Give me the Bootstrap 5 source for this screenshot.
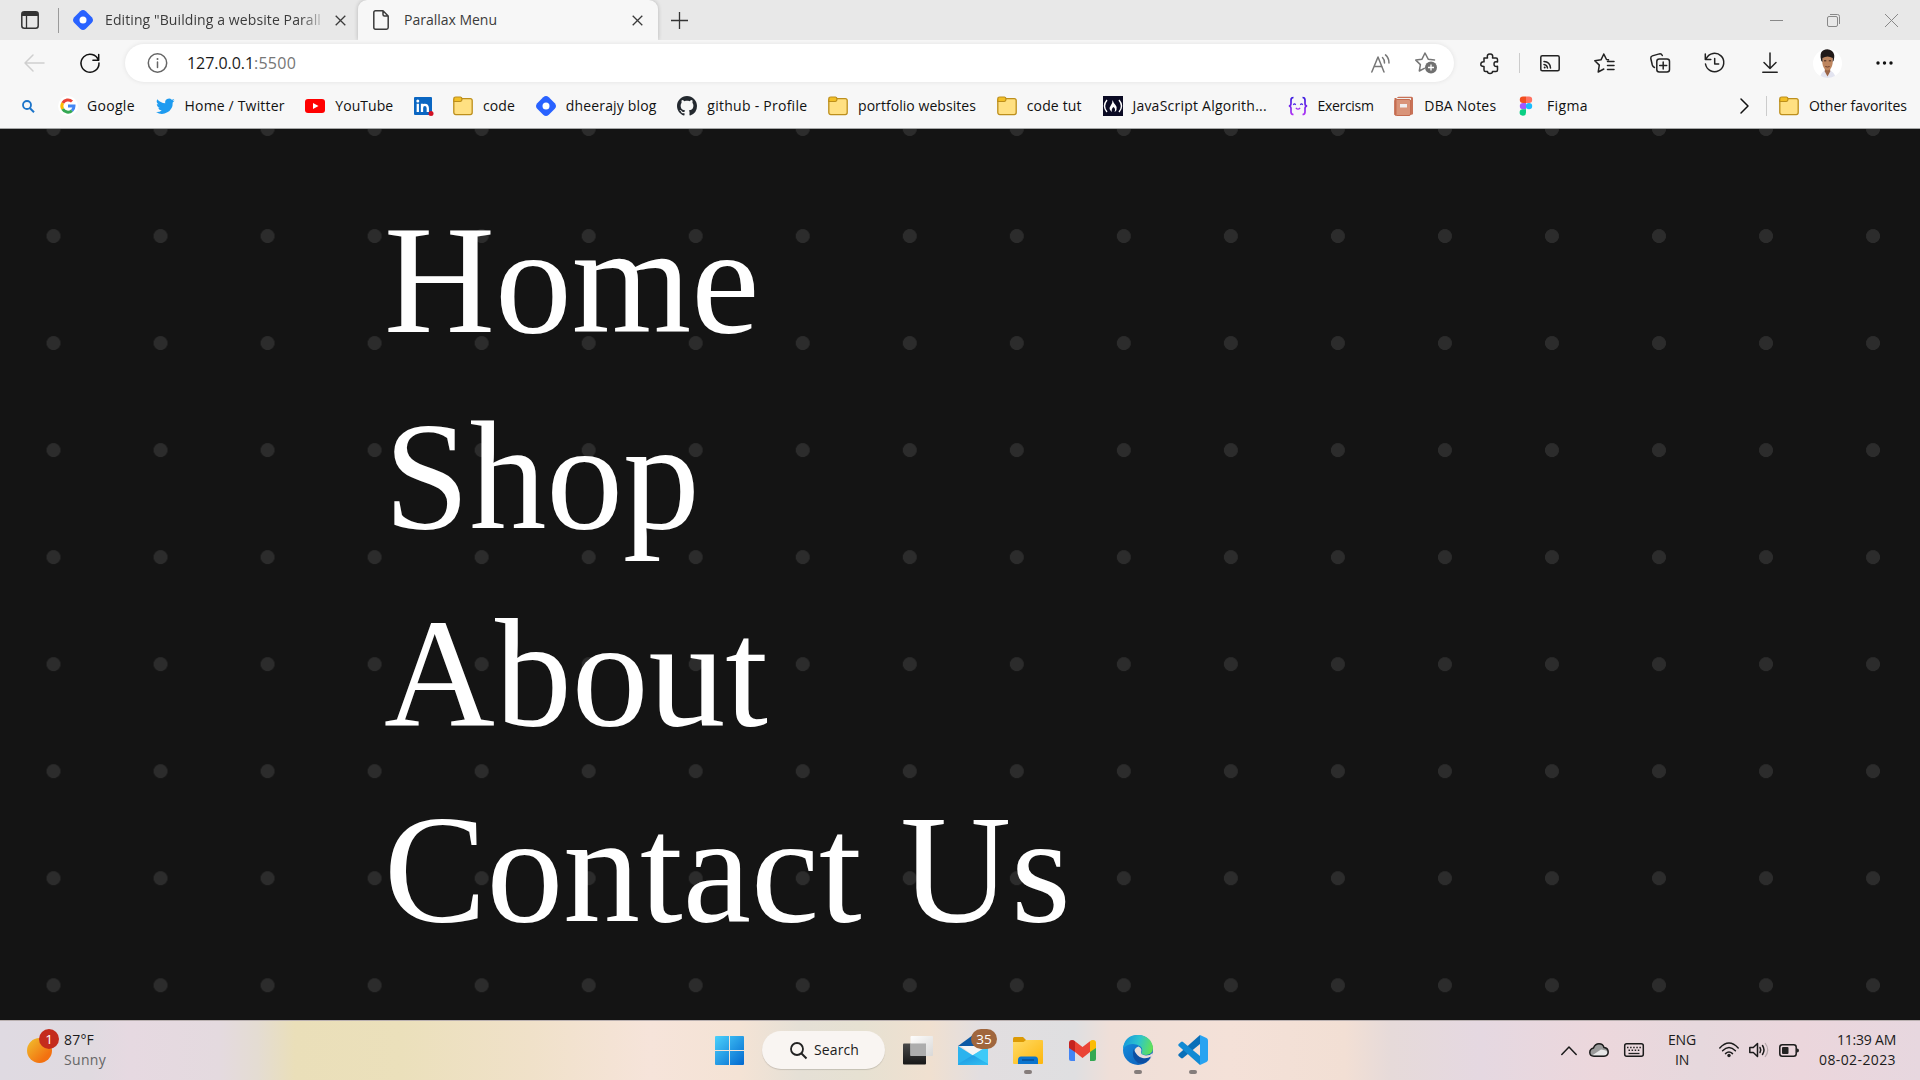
<!DOCTYPE html>
<html lang="en">
<head>
<meta charset="utf-8">
<meta name="viewport" content="width=device-width, initial-scale=1">
<title>Parallax Menu</title>
<link href="https://cdn.jsdelivr.net/npm/bootstrap@5.3.0/dist/css/bootstrap.min.css" rel="stylesheet">
<style>
body{font-family:"Open Sans","Noto Sans",sans-serif;font-size:14px;line-height:20px;color:#1b1b1b;background:#141414}
svg{display:block;flex:none;overflow:visible}
.screen{width:1920px;height:1080px}
.ln{fill:none;stroke:currentColor;stroke-width:1.5;stroke-linecap:round;stroke-linejoin:round}
[data-w]{display:inline-block;white-space:nowrap}
/* tab strip */
.tabstrip{height:40px;background:#e8e8e8;color:#3b3b3b}
.tab-idle{width:299px;height:40px;padding-left:14px;position:relative}
.tab-live{width:300px;height:40px;background:#f7f7f7;border-radius:9px 9px 0 0;padding:0 15px 0 15px;box-shadow:0 0 4px rgba(0,0,0,.22);clip-path:inset(-4px -4px 0 -4px)}
.fade-label{width:219px;-webkit-mask-image:linear-gradient(90deg,#000 195px,rgba(0,0,0,.2) 217px);mask-image:linear-gradient(90deg,#000 195px,rgba(0,0,0,.2) 217px)}
.vline{width:1px;background:#9a9a9a}
.win-ctl{gap:44px;padding-right:22px;color:#999}
/* address row */
.tools{height:45px;background:#f7f7f7;padding-left:24px;padding-right:26px;padding-top:1px}
.omnibox{width:1329px;height:38px;border-radius:19px;background:#fff;box-shadow:0 0 5px rgba(0,0,0,.09);padding:0 16px 0 23px;font-size:16px}
.tool-set{gap:0;color:#222}
.avatar-pic{width:29px;height:29px}
/* favourites */
.favs{height:44px;background:#f7f7f7;border-bottom:1px solid #a5a7a7;padding:0 13px 1px 22px;color:#111}
.fav{display:flex;align-items:center;gap:9.9px;margin-right:20.8px;flex:none}
/* page */
.stage{height:891px;background-color:#141414;background-image:radial-gradient(circle at center,#2c2c2c 6.6px,transparent 7.3px);background-size:107.04px 107.04px;background-position:0 -53.5px;padding:53px 0 0 384px}
.menu-link{display:block;font-family:"Liberation Serif","Times New Roman",serif;font-size:153.6px;line-height:196.3px;color:#fff;text-decoration:none;width:max-content}
/* taskbar */
.taskbar{height:60px;border-top:1px solid #b9b0b0;background:linear-gradient(90deg,#dfdae2 0,#e0dae0 90px,#e6d9e1 130px,#e4dadf 220px,#e4dcd2 258px,#eadfb9 295px,#ebe0bb 400px,#f0e1c9 530px,#f6e4da 650px,#f4e3d5 740px,#e5e0d6 800px,#e6e1d2 860px,#f0e0d0 930px,#e2dee0 980px,#dfdfe1 1075px,#efdfd8 1110px,#f4e1d8 1230px,#f2dfd4 1345px,#e6dad9 1390px,#e5d8e1 1480px,#ecd7dc 1600px,#e6d8dd 1700px,#ebd6dc 1800px,#e7d7df 1920px);padding-bottom:1px}
.weather{width:715px;padding-left:27px}
.search-pill{width:123px;height:38px;border-radius:19px;background:#f9f5f2;box-shadow:0 1px 1px rgba(0,0,0,.15);padding-left:28px;gap:7px;margin:0 18px}
.app{width:30px;height:58px;display:flex;align-items:center;position:relative;margin-right:25px}
.app.running::after{content:"";position:absolute;left:11px;bottom:5px;width:8px;height:4px;border-radius:2px;background:#857d7b}
.count{position:absolute;left:13px;top:8px;width:26px;height:20px;border-radius:10px;background:#a0663d;color:#fff;text-align:center;font-size:13.500px}
.alert-dot{position:absolute;left:12px;top:-9px;width:20px;height:20px;border-radius:50%;background:#c42b1c;color:#fff;text-align:center;font-size:13.500px}
.tray{margin-left:auto;padding-right:24px}
.two-line{margin-top:-1px}
.dim{color:#666}
</style>
<script src="https://cdn.jsdelivr.net/npm/bootstrap@5.3.0/dist/js/bootstrap.bundle.min.js"></script>
</head>
<body>
<svg width="0" height="0" class="position-absolute">
  <defs>
    <symbol id="folder" viewBox="0 0 20 20"><rect x=".8" y="2.6" width="18.4" height="16" rx="2" fill="#ffe082" stroke="#bd8f1c" stroke-width="1.3"/><path d="M.8 5.5V3Q.8 1 2.8 1h4.6Q9 1.200 9 3.200T7.200 5.500z" fill="#f2bf26" stroke="#bd8f1c" stroke-width="1.200"/></symbol>
    <symbol id="hashnode" viewBox="0 0 20 20"><path d="M7.200 1.200q2.800-2.400 5.600 0l6 6q2.400 2.800 0 5.600l-6 6q-2.800 2.400-5.600 0l-6-6q-2.400-2.800 0-5.600z" fill="#2962ff"/><circle cx="10" cy="10" r="3.500" fill="#fff"/></symbol>
    <symbol id="cross" viewBox="0 0 11 11"><path d="M.7.7l9.600 9.600M10.300.7L.7 10.300" fill="none" stroke="currentColor" stroke-width="1.300"/></symbol>
    <linearGradient id="gWin" x1="0" y1="0" x2="1" y2="1"><stop offset="0" stop-color="#4bd1fb"/><stop offset="1" stop-color="#0268cf"/></linearGradient>
    <linearGradient id="gSun" x1="0" y1="0" x2="1" y2="1"><stop offset="0" stop-color="#f0c22f"/><stop offset=".75" stop-color="#f37110"/></linearGradient>
    <linearGradient id="gFold" x1="0" y1="0" x2="1" y2="1"><stop offset="0" stop-color="#ffdb66"/><stop offset="1" stop-color="#fdb60c"/></linearGradient>
    <linearGradient id="gMail" x1="0" y1="0" x2="1" y2="1"><stop offset="0" stop-color="#1484d8"/><stop offset="1" stop-color="#35c6f4"/></linearGradient>
    <linearGradient id="gEdgeA" x1="0" y1=".3" x2="1" y2=".5"><stop offset="0" stop-color="#1696dc"/><stop offset=".5" stop-color="#2cc4ce"/><stop offset="1" stop-color="#63e256"/></linearGradient>
    <linearGradient id="gEdgeB" x1="0" y1="0" x2="1" y2="1"><stop offset="0" stop-color="#1794e0"/><stop offset="1" stop-color="#0b55b5"/></linearGradient>
    <linearGradient id="gDark" x1="0" y1="0" x2="0" y2="1"><stop offset="0" stop-color="#4a4a4a"/><stop offset="1" stop-color="#171717"/></linearGradient>
    <linearGradient id="gLite" x1="0" y1="0" x2="1" y2="1"><stop offset="0" stop-color="#fff"/><stop offset="1" stop-color="#d8d8d8"/></linearGradient>
    <linearGradient id="gEx" x1="0" y1="0" x2="0" y2="1"><stop offset="0" stop-color="#3a1be0"/><stop offset="1" stop-color="#ae32f5"/></linearGradient>
  </defs>
</svg>

<div class="screen d-flex flex-column overflow-hidden">
  <header>
    <!-- tab strip -->
    <div class="tabstrip d-flex align-items-center">
      <svg style="margin-left:21px" width="18" height="18"><rect x=".8" y=".8" width="16.400" height="16.400" rx="2.500" fill="none" stroke="#333" stroke-width="1.500"/><path d="M1 5V3q0-2 2-2h12q2 0 2 2v2z" fill="#333"/><path d="M5.500 5v12" stroke="#333" stroke-width="1.300"/></svg>
      <div class="vline" style="height:25px;margin-left:19px"></div>
      <div class="tab-idle d-flex align-items-center">
        <svg width="20" height="20"><use href="#hashnode"/></svg>
        <div class="fade-label" style="margin-left:12px"><span data-w="216">Editing "Building a website Parall</span></div>
        <svg width="11" height="11" style="margin-left:11px"><use href="#cross"/></svg>
      </div>
      <div class="tab-live d-flex align-items-center">
        <svg width="16" height="20"><path class="ln" d="M2.500.800H10L15.200 6v11.500q0 1.700-1.700 1.700h-11Q.8 19.200.8 17.500v-15Q.8.800 2.500.800zM10 .800V4.500Q10 6 11.500 6h3.700"/></svg>
        <span data-w="93" style="margin-left:15px">Parallax Menu</span>
        <svg width="11" height="11" class="ms-auto"><use href="#cross"/></svg>
      </div>
      <svg width="17" height="17" style="margin-left:13px"><path d="M8.500 0v17M0 8.500h17" stroke="#333" stroke-width="1.300"/></svg>
      <div class="win-ctl d-flex align-items-center ms-auto">
        <svg width="13" height="13"><path d="M-1 6.500h13" stroke="#888"/></svg>
        <svg width="13" height="13"><rect x="-.5" y="2.500" width="10" height="10" rx="1.500" fill="none" stroke="#888"/><path d="M2 .5h7.500q2 0 2 2V10" fill="none" stroke="#888"/></svg>
        <svg width="13" height="13"><path d="M0 0l13 13M13 0L0 13" stroke="#888"/></svg>
      </div>
    </div>

    <!-- address row -->
    <div class="tools d-flex align-items-center">
      <svg width="21" height="18" style="color:#cfcfcf"><path class="ln" d="M20 9H1M9 1L1 9l8 8"/></svg>
      <svg width="20" height="20" style="margin-left:35px;color:#111"><path class="ln" d="M18.500 7.300A9 9 0 1 0 19 10M18.700 1.500v5.800h-5.800" stroke-width="1.700"/></svg>
      <div class="omnibox d-flex align-items-center" style="margin-left:25px">
        <svg width="20" height="20" style="color:#666"><circle class="ln" cx="9.500" cy="10" r="9.200"/><path class="ln" d="M9.500 9v5.500"/><circle cx="9.500" cy="6" r="1" fill="#666"/></svg>
        <span data-w="67" style="margin-left:19px">127.0.0.1</span><span data-w="42" style="color:#767676">:5500</span>
        <svg class="ms-auto" width="20" height="19" style="color:#777"><path class="ln" d="M.8 18L7 3l6 15M3 12.500h8M11.500 3.500q2.200 2.200 2 5.500M14.500.900q3.600 3.300 3.500 8" stroke-width="1.300"/></svg>
        <svg width="23" height="22" style="margin-left:24px;color:#777"><path class="ln" d="M19.500 8l-6.300-.8L10 1 7 7.200.800 8.100l4.600 4.500L4.300 19l5-2.700" stroke-width="1.300"/><circle cx="16" cy="15.500" r="6" fill="#707070"/><path d="M16 12.500v6M13 15.500h6" stroke="#fff" stroke-width="1.300"/></svg>
      </div>
      <div class="tool-set d-flex align-items-center">
        <svg width="20" height="21" style="margin-left:26px"><path class="ln" d="M4 5h3.500Q6.500 1 10 1t2.500 4H16q1.500 0 1.500 1.500V9Q14 8 14 11t3.500 2.300V17q0 1.500-1.500 1.500h-3.500q0 2-2.500 2t-2.500-2H5.500Q4 18.500 4 17v-3.500Q.5 13.500.8 11T4 8.800z" stroke-width="1.600"/></svg>
        <div class="vline" style="height:20px;margin:0 20px 0 19px;background:#ccc"></div>
        <svg width="20" height="17"><rect class="ln" x=".8" y=".8" width="18.400" height="15" rx="1.500"/><path class="ln" d="M4 6.500q6 .2 6.500 6.500M4 9.500q3 .300 3.500 3.500" stroke-width="1.300"/><circle cx="4.700" cy="12.500" r="1" fill="#222"/></svg>
        <svg width="21" height="20" style="margin-left:34px"><path class="ln" d="M14.500 6.800l-2-.3L9.800 1 7 6.800l-6.200.9 4.500 4.400L4.200 19l5.600-3M13.500 8.500H20M13.500 12.500H20M13.500 16.500H20"/></svg>
        <svg width="20" height="20" style="margin-left:35px"><rect class="ln" x="6.800" y="6" width="12.700" height="13" rx="2.500"/><path class="ln" d="M13.200 9v7M9.700 12.500h7M4.500 14.500Q2.800 13.700 2.300 12L.8 5.500q-.300-2 1.500-2.600l7-2q2-.500 3 1.600"/></svg>
        <svg width="21" height="20" style="margin-left:34px"><path class="ln" d="M2.300 5.500A9.200 9.200 0 1 1 1.500 11M1.300 1v5.500h5.500M10.700 5.500v5.500h4" stroke-width="1.600"/></svg>
        <svg width="16" height="20" style="margin-left:37px"><path class="ln" d="M8 0v15M2 9.500l6 6 6-6M.8 19.200h14.400" stroke-width="1.600"/></svg>
        <svg class="avatar-pic" viewBox="0 0 29 29" style="margin-left:35px"><circle cx="14.500" cy="14.500" r="14.500" fill="#fff"/><path d="M7.500 27q1-4 4.500-5.500h5q4 1.500 5 5.500-7.500 4-14.500 0z" fill="#e3e4f0"/><path d="M11.800 18h5.400v4.500l-2.700 5-2.700-5z" fill="#9b6547"/><path d="M9.300 8q5.200-4 10.400 0v6q-1 7-5.200 7.500Q10.300 21 9.300 14z" fill="#bd855f"/><path d="M8.300 12Q6 4 10 1.500q5-2.500 9 .5 3.500 3 1.700 9.500l-1 1.500V9Q14.500 6 9.500 9v4z" fill="#211a19"/><path d="M11 11.800h2.300M15.800 11.800h2.300" stroke="#44291f" stroke-width="1"/><path d="M12.300 17.500q2.200 1 4.400 0" stroke="#70402f" fill="none"/></svg>
        <svg width="17" height="4" style="margin-left:34px"><g fill="#111"><circle cx="2" cy="2" r="1.700"/><circle cx="8.500" cy="2" r="1.700"/><circle cx="15" cy="2" r="1.700"/></g></svg>
      </div>
    </div>

    <!-- favourites bar -->
    <nav class="favs d-flex align-items-center">
      <svg width="12" height="13" style="margin-right:24px"><circle cx="5" cy="5" r="4" fill="none" stroke="#1c74c9" stroke-width="1.800"/><path d="M8 8.300l4 4" stroke="#1c74c9" stroke-width="2"/></svg>
      <div class="fav"><svg width="20" height="20"><circle cx="10" cy="10" r="10" fill="#fff"/><g fill="none" stroke-width="3"><path d="M4.700 7A6 6 0 0 1 14 5.500" stroke="#ea4335"/><path d="M4.700 13a6 6 0 0 1 0-6" stroke="#fbbc05"/><path d="M14 14.600A6 6 0 0 1 4.700 13" stroke="#34a853"/><path d="M10 10h6a6 6 0 0 1-2 4.600" stroke="#4285f4"/></g></svg><span data-w="48" style="margin-left:-1px">Google</span></div>
      <div class="fav"><svg width="19" height="20" viewBox="0 0 24 24"><path fill="#1d9bf0" d="M23.600 4.900c-.8.400-1.700.6-2.700.8a4.800 4.800 0 0 0 2.100-2.700c-.9.600-2 1-3.100 1.200A4.800 4.800 0 0 0 11.700 8.600 13.600 13.600 0 0 1 1.700 3.600 4.800 4.800 0 0 0 3.200 10c-.8 0-1.600-.2-2.200-.6 0 2.300 1.600 4.400 3.900 4.800-.7.200-1.500.2-2.200.1a4.800 4.800 0 0 0 4.500 3.300A9.700 9.700 0 0 1 .1 19.600a13.600 13.600 0 0 0 21-12.100c1-.7 1.800-1.600 2.500-2.600z"/></svg><span data-w="100">Home / Twitter</span></div>
      <div class="fav"><svg width="20" height="20"><rect y="3" width="20" height="14" rx="3" fill="#f00"/><path d="M8 7l5.500 3L8 13z" fill="#fff"/></svg><span data-w="58">YouTube</span></div>
      <div class="fav" style="margin-right:19px"><svg width="20" height="20"><rect x="0" y="1" width="18" height="18" rx="1" fill="#0a66c2"/><circle cx="3.800" cy="5" r="1.500" fill="#fff"/><path d="M3.800 7.800V16M8 16V7.800M8 12q0-3.200 2.800-3.200T13.800 12v4" fill="none" stroke="#fff" stroke-width="2.300"/><circle cx="17" cy="17.500" r="2.500" fill="#d11124"/></svg></div>
      <div class="fav"><svg width="20" height="20"><use href="#folder"/></svg><span data-w="32">code</span></div>
      <div class="fav"><svg width="20" height="20"><use href="#hashnode"/></svg><span data-w="91">dheerajy blog</span></div>
      <div class="fav"><svg width="20" height="20" viewBox="0 0 16 16"><path fill="#24292f" d="M8 0C3.580 0 0 3.580 0 8c0 3.540 2.290 6.530 5.470 7.590.4.070.55-.17.55-.38 0-.19-.01-.82-.01-1.490-2.010.37-2.530-.49-2.690-.94-.09-.23-.48-.94-.82-1.130-.28-.15-.68-.52-.01-.53.63-.01 1.080.58 1.230.82.72 1.210 1.870.87 2.330.66.070-.52.280-.87.510-1.070-1.780-.2-3.640-.89-3.640-3.950 0-.87.310-1.590.82-2.150-.08-.2-.36-1.020.08-2.120 0 0 .67-.21 2.200.82.640-.18 1.320-.27 2-.27s1.360.09 2 .27c1.530-1.040 2.200-.82 2.200-.82.44 1.100.16 1.920.08 2.120.51.56.82 1.270.82 2.150 0 3.070-1.870 3.750-3.650 3.950.29.25.54.73.54 1.480 0 1.070-.01 1.930-.01 2.200 0 .21.15.46.55.38A8.010 8.010 0 0 0 16 8c0-4.420-3.580-8-8-8z"/></svg><span data-w="100">github - Profile</span></div>
      <div class="fav"><svg width="20" height="20"><use href="#folder"/></svg><span data-w="118">portfolio websites</span></div>
      <div class="fav"><svg width="20" height="20"><use href="#folder"/></svg><span data-w="55">code tut</span></div>
      <div class="fav"><svg width="20" height="20"><path d="M0 0h20v20H0z" fill="#0a0a23"/><path d="M4 4q-5 6 0 12M16 4q5 6 0 12" fill="none" stroke="#fff" stroke-width="1.400"/><path d="M9.500 4q1 3 3 5t1 5q-.7 1.500-2 2 1.500-3-1-5-2.500 1.800-1.500 5Q5 13 7.500 10 9.800 7 9.500 4z" fill="#fff"/></svg><span data-w="134.500">JavaScript Algorith...</span></div>
      <div class="fav"><svg width="20" height="20"><g fill="none" stroke="url(#gEx)" stroke-width="1.700"><path d="M5.500 1.500Q3 1.500 3 4v3.500Q3 10 .8 10 3 10 3 12.500V16q0 2.500 2.500 2.500M14.500 1.500Q17 1.500 17 4v3.500q0 2.500 2.200 2.500Q17 10 17 12.500V16q0 2.500-2.500 2.500"/><path d="M5.300 8.800q1.200-1.800 2.400 0M12.300 8.800q1.200-1.800 2.400 0M7.800 11.800q2.200 2.600 4.400 0" stroke-width="1.200"/></g></svg><span data-w="56">Exercism</span></div>
      <div class="fav"><svg width="20" height="20"><rect x="3" y=".8" width="16" height="18" rx="1.500" fill="#c87257"/><path d="M2 3h15" stroke="#eee" stroke-width="2"/><rect x=".8" y="3.500" width="15.700" height="16" rx="1.500" fill="#d99479" stroke="#c56c50" stroke-width="1"/><path d="M1.500 2v17" stroke="#c56c50" stroke-width="2"/><rect x="6" y="8" width="7" height="3.500" fill="#f1eeee"/></svg><span data-w="72">DBA Notes</span></div>
      <div class="fav"><svg width="20" height="20" viewBox="0 0 20 20"><path d="M9 .5H6a3.200 3.200 0 0 0 0 6.400h3z" fill="#f24e1e"/><path d="M9 .5h3a3.200 3.200 0 0 1 0 6.400H9z" fill="#ff7262"/><path d="M9 6.900H6a3.200 3.200 0 0 0 0 6.400h3z" fill="#a259ff"/><circle cx="12" cy="10.100" r="3.200" fill="#1abcfe"/><path d="M9 13.300H6a3.200 3.200 0 1 0 3 3.200z" fill="#0acf83"/></svg><span data-w="41">Figma</span></div>
      <svg class="ms-auto" width="9" height="16"><path class="ln" d="M1 1l7 7-7 7"/></svg>
      <div class="vline" style="height:20px;margin:0 12px 0 17px;background:#ccc"></div>
      <div class="fav me-0"><svg width="20" height="20"><use href="#folder"/></svg><span data-w="98">Other favorites</span></div>
    </nav>
  </header>

  <!-- page content -->
  <main class="stage">
    <a class="menu-link" href="#">Home</a>
    <a class="menu-link" href="#">Shop</a>
    <a class="menu-link" href="#">About</a>
    <a class="menu-link" href="#">Contact Us</a>
  </main>

  <!-- taskbar -->
  <footer class="taskbar d-flex align-items-center">
    <div class="weather d-flex align-items-center">
      <div class="position-relative"><svg width="25" height="25"><circle cx="12.500" cy="12.500" r="12.500" fill="url(#gSun)"/></svg><span class="alert-dot">1</span></div>
      <div class="two-line" style="margin-left:12px"><div><span data-w="30">87°F</span></div><div class="dim"><span data-w="42">Sunny</span></div></div>
    </div>
    <svg width="29" height="29"><g fill="url(#gWin)"><path d="M1 0h13v14H0V1q0-1 1-1zM15 0h13q1 0 1 1v13H15zM0 15h14v14H1q-1 0-1-1zM15 15h14v13q0 1-1 1H15z"/></g></svg>
    <div class="search-pill d-flex align-items-center"><svg width="17" height="17"><circle cx="7" cy="7" r="6" fill="none" stroke="#222" stroke-width="1.800"/><path d="M11.500 11.500l5 5" stroke="#222" stroke-width="1.900"/></svg><span data-w="45">Search</span></div>
    <div class="app"><svg width="30" height="29"><rect y="7.500" width="23" height="21" rx="1" fill="url(#gDark)"/><rect x="7.500" y="0" width="22.500" height="20" rx="1" fill="url(#gLite)" opacity=".95"/><rect x="7.500" y="7.500" width="15.500" height="12.500" fill="#adadad"/></svg></div>
    <div class="app"><svg width="30" height="29"><path d="M0 10L15-1l15 11z" fill="#0c59a4"/><path d="M3 10h24l-12 10z" fill="#f5f5f5"/><path d="M0 10l15 9.500L30 10v19H0z" fill="#2bb3ee"/><path d="M30 10v18L15 19z" fill="#3fcaf8"/><path d="M0 29h30L15 19 0 28z" fill="url(#gMail)" opacity=".7"/></svg><span class="count">35</span></div>
    <div class="app running"><svg width="30" height="27"><path d="M0 6V1.500Q0 0 1.500 0H10l3 3v5H0z" fill="#dc9a05"/><path d="M0 5h10.500L13 3h16q1 0 1 1v22q0 1-1 1H1q-1 0-1-1z" fill="url(#gFold)"/><path d="M5 27v-4q0-3.500 3-3.500h14q3 0 3 3.500v4z" fill="#0a74ce"/><path d="M9 23h12" stroke="#064d91" stroke-width="1.400"/></svg></div>
    <div class="app"><svg width="28" height="21" style="margin-left:1px"><path d="M0 4h6v17H2q-2 0-2-2z" fill="#4285f4"/><path d="M21 4h6v15q0 2-2 2h-4z" fill="#34a853"/><path d="M0 8V3q0-3 3-3 2 0 3 1.200V12z" fill="#c5221f"/><path d="M21 12V1.200Q22 0 24 0q3 0 3 3v5z" fill="#fbbc04"/><path d="M6 1.200L13.500 7 21 1.200V12l-7.500 6L6 12z" fill="#ea4335"/></svg></div>
    <div class="app running"><svg width="30" height="30"><circle cx="15" cy="15" r="15" fill="url(#gEdgeB)"/><path d="M0 13Q2 0 15 0q13 .5 15 12.500 0 7-7 7.500-5 0-4.500-2.500 1.800-3.500-1-6Q14 8.500 9 9 3 9.500 0 14z" fill="url(#gEdgeA)"/><path d="M11.500 16q.3-3.500 4-4.500 3.800 2 2.700 5-1.200 3.500 4.800 4 4 0 6.500-2.500 1 2.500-1.500 4.500-4 2.500-8.500 1.500-6-1.500-8-8z" fill="#e9dcda"/><path d="M10.500 14q-2.500 9 4.500 14 8 2 13-6.500-4 2.500-8.500 1.500-6-1.500-9-9z" fill="#0c4fa3"/></svg></div>
    <div class="app running me-0"><svg width="30" height="30"><path d="M22 0v9L5 23q-1 .8-2 0l-2.300-2q-1-1 0-2z" fill="#0a6fb8"/><path d="M22 30v-9L5 7Q4 6.200 3 7L.7 9q-1 1 0 2z" fill="#118ad4"/><path d="M22 0l6.500 3Q30 3.700 30 5.500v19q0 1.700-1.500 2.500L22 30z" fill="#28a3f1"/></svg></div>

    <div class="tray d-flex align-items-center">
      <svg width="16" height="9"><path class="ln" d="M.8 8.500L8 1l7.200 7.500"/></svg>
      <svg width="20" height="14" style="margin-left:12px"><path d="M5 13.200Q.8 13 .8 9.500.8 6 4.500 5 6 .800 10 .800T15 4.500q4.200.5 4.200 4.500 0 4-4.200 4.200z" fill="#9a9a9a"/><path d="M3 12.500l9-6q6 .5 6.500 3 0 3-4 3.200z" fill="#e6e6e6"/><path class="ln" d="M5 13.200Q.8 13 .8 9.500.8 6 4.500 5 6 .800 10 .800T15 4.500q4.200.5 4.200 4.500 0 4-4.200 4.200z" stroke-width="1.200"/></svg>
      <svg width="20" height="14" style="margin-left:15px"><rect class="ln" x=".7" y=".7" width="18.600" height="12.600" rx="2" stroke-width="1.300"/><path d="M3 4.500h14M4.500 7.300h11" stroke="#222" stroke-width="1.400" stroke-dasharray="1.500 1.600"/><path d="M4.500 10.500h11" stroke="#222" stroke-width="1.300"/></svg>
      <div class="text-center" style="width:28px;margin-left:24px"><div><span data-w="28">ENG</span></div><div><span data-w="14">IN</span></div></div>
      <svg width="20" height="16" style="margin-left:23px"><path class="ln" d="M.8 6Q10-3.800 19.200 6M3.600 8.800Q10 2.200 16.400 8.800M6.500 11.600Q10 8.300 13.500 11.600" stroke-width="1.300"/><circle cx="10" cy="13.500" r="1.700" fill="#222"/></svg>
      <svg width="20" height="16" style="margin-left:10px"><path class="ln" d="M.8 5.500v5h3.500L8.500 14.500v-13L4.300 5.500zM11 5.500q1.500 2.500 0 5M13.500 3.500q3 4.500 0 9" stroke-width="1.200"/><path d="M16 1q5.500 7 0 14" fill="none" stroke="#b5a8ab" stroke-width="1.200"/></svg>
      <svg width="20" height="13" style="margin-left:10px"><rect class="ln" x=".8" y=".8" width="16.400" height="11.400" rx="2.500" stroke-width="1.400"/><rect x="3" y="3" width="6.500" height="7" rx="1" fill="#222"/><path d="M18 4.500q2 0 2 2t-2 2z" fill="#222"/></svg>
      <div class="text-end two-line" style="width:78px;margin-left:19px"><div><span data-w="59">11:39 AM</span></div><div><span data-w="77">08-02-2023</span></div></div>
    </div>
  </footer>
</div>
<script>
// Spread each label's letters so that it fills its declared width.
document.querySelectorAll('[data-w]').forEach(function (el) {
  var want = parseFloat(el.dataset.w), have = el.getBoundingClientRect().width;
  el.style.letterSpacing = ((want - have) / el.textContent.length) + 'px';
});
</script>
</body>
</html>
